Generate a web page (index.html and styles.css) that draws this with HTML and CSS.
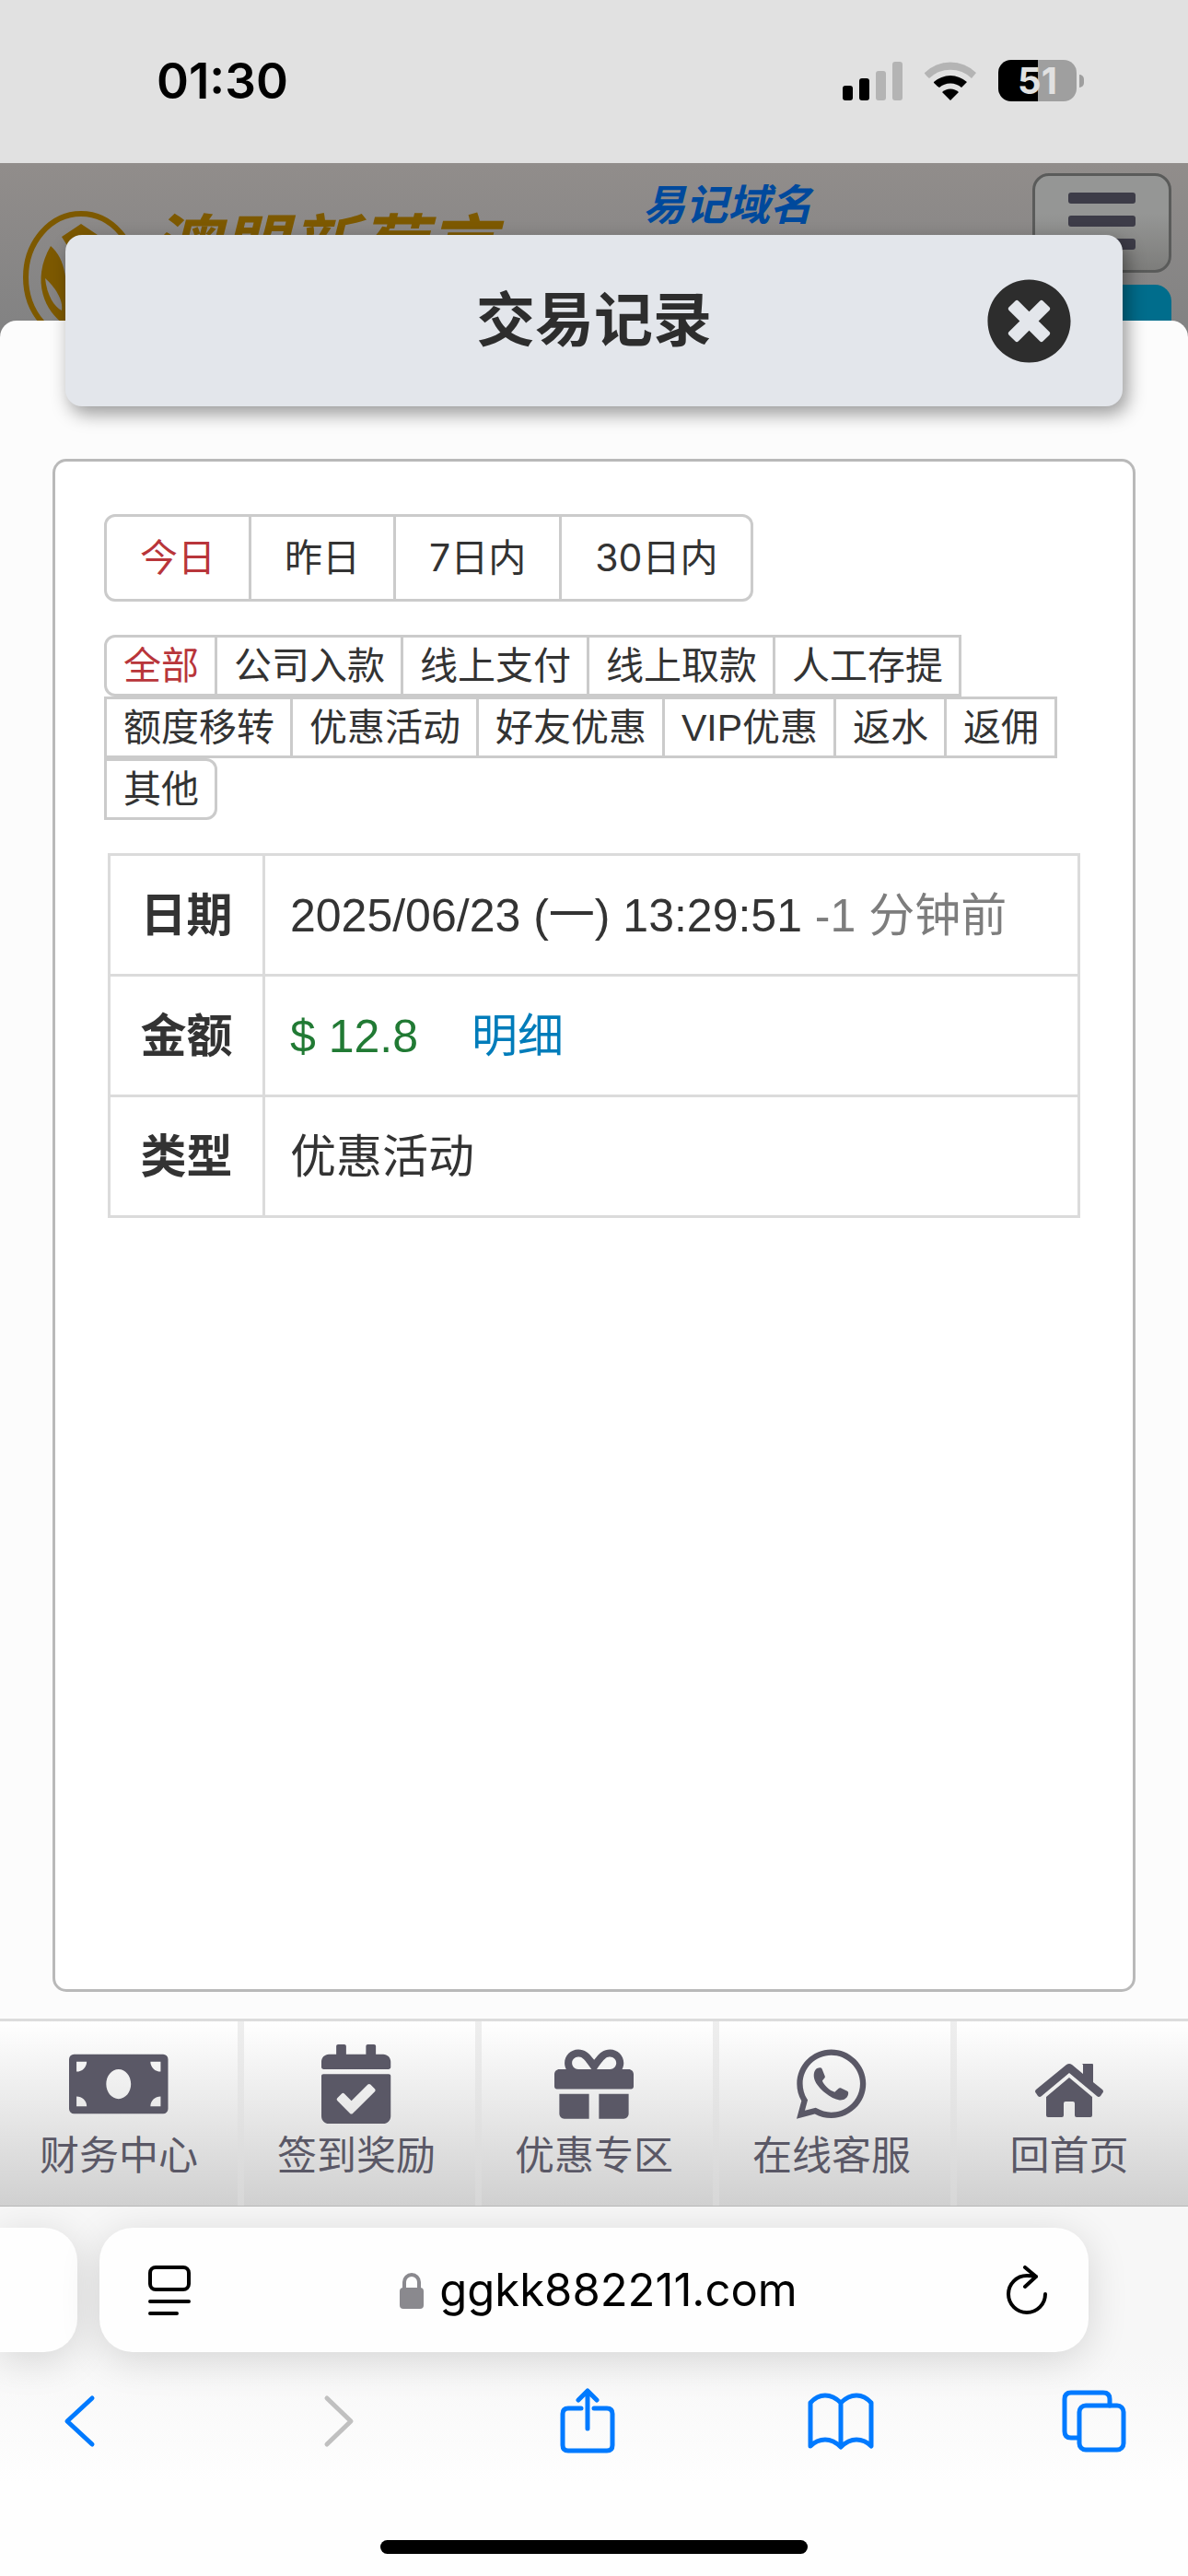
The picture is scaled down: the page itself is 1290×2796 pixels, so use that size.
FILE: index.html
```html
<!DOCTYPE html>
<html lang="zh-CN">
  <head>
    <meta charset="utf-8">
    <title>交易记录</title>
    <link rel="stylesheet" href="styles.css">
  </head>

  <body>
    <div class="status-bar">
      <span class="time">01:30</span>
      <div class="status-icons">
        <svg class="signal" viewBox="0 0 65 42">
          <rect x="0" y="26" width="11" height="16" rx="3" />
          <rect x="18" y="18" width="11" height="24" rx="3" />
          <rect class="off" x="36" y="10" width="11" height="32" rx="3" />
          <rect class="off" x="54" y="0" width="11" height="42" rx="3" />
        </svg>
        <svg class="wifi" viewBox="0 0 58 42">
          <path class="off" d="M1 12A40 40 0 0 1 57 12L52 18A33 33 0 0 0 6 18Q0 13 1 12Z" />
          <path d="M11 22A27 27 0 0 1 47 22L41 28A18 18 0 0 0 17 28Q10 23 11 22Z" />
          <path d="M20 33A13 13 0 0 1 38 33L29 42Z" />
        </svg>
        <div class="battery">
          <span class="battery-level">51</span>
          <span class="battery-cap"></span>
        </div>
      </div>
    </div>

    <div class="screen">
      <header class="site-header">
        <svg class="logo" viewBox="0 0 126 144">
          <ellipse cx="63" cy="72" rx="60" ry="69" fill="none" stroke="#7d5900" stroke-width="6" />
          <path d="M63 14L84 28L74 44L63 34L52 44L42 28Z" />
          <path d="M30 38C46 52 50 76 46 124C24 110 8 76 30 38Z" />
          <path d="M96 38C80 52 76 76 80 124C102 110 118 76 96 38Z" />
          <path class="vein" d="M24 73C34 82 44 96 42 108C34 104 26 92 24 73Z" />
        </svg>
        <span class="brand">澳盟新葡京</span>
        <a class="domain" href="#">易记域名</a>
        <div class="site-actions">
          <button class="menu" type="button" aria-label="菜单">
            <span></span>
            <span></span>
            <span></span>
          </button>
          <a class="login" href="#" aria-label="登录"></a>
        </div>
      </header>

      <main class="sheet">
        <div class="sheet-head">
          <h1>交易记录</h1>
          <button class="close" type="button" aria-label="关闭">
            <svg viewBox="0 0 512 512"><path d="M256 8C119 8 8 119 8 256s111 248 248 248 248-111 248-248S393 8 256 8zm121.6 313.1c4.7 4.7 4.7 12.3 0 17L338 377.6c-4.7 4.7-12.3 4.7-17 0L256 312l-65.1 65.6c-4.7 4.7-12.3 4.7-17 0L134.4 338c-4.7-4.7-4.7-12.3 0-17l65.6-65-65.6-65.1c-4.7-4.7-4.7-12.3 0-17l39.6-39.6c4.7-4.7 12.3-4.7 17 0l65 65.7 65.1-65.6c4.7-4.7 12.3-4.7 17 0l39.6 39.6c4.7 4.7 4.7 12.3 0 17L312 256l65.6 65.1z" /></svg>
          </button>
        </div>

        <div class="card">
          <div class="filter days">
            <button class="active" type="button">今日</button>
            <button type="button">昨日</button>
            <button type="button">7日内</button>
            <button type="button">30日内</button>
          </div>

          <div class="filter types">
            <button class="active" type="button">全部</button>
            <button type="button">公司入款</button>
            <button type="button">线上支付</button>
            <button type="button">线上取款</button>
            <button type="button">人工存提</button>
            <button type="button">额度移转</button>
            <button type="button">优惠活动</button>
            <button type="button">好友优惠</button>
            <button type="button">VIP优惠</button>
            <button type="button">返水</button>
            <button type="button">返佣</button>
            <button type="button">其他</button>
          </div>

          <table class="record">
            <tr>
              <th scope="row">日期</th>
              <td>2025/06/23 (一) 13:29:51 <span class="ago">-1 分钟前</span></td>
            </tr>
            <tr>
              <th scope="row">金额</th>
              <td><span class="amount">$ 12.8</span><a class="detail" href="#">明细</a></td>
            </tr>
            <tr>
              <th scope="row">类型</th>
              <td>优惠活动</td>
            </tr>
          </table>
        </div>
      </main>
    </div>

    <nav class="tabs">
      <a href="#">
        <svg viewBox="0 0 640 512"><path fill-rule="evenodd" d="M32 64H608A32 32 0 0 1 640 96V416A32 32 0 0 1 608 448H32A32 32 0 0 1 0 416V96A32 32 0 0 1 32 64ZM320 160C276 160 240 203 240 256S276 352 320 352 400 309 400 256 364 160 320 160ZM48 112V176A66 64 0 0 0 114 112ZM592 112H526A66 64 0 0 0 592 176ZM48 400H114A66 64 0 0 0 48 336ZM592 400V336A66 64 0 0 0 526 400Z" /></svg>
        <span>财务中心</span>
      </a>
      <a href="#">
        <svg viewBox="0 0 448 512"><path d="M436 160H12c-6.627 0-12-5.373-12-12v-36c0-26.51 21.49-48 48-48h48V12c0-6.627 5.373-12 12-12h40c6.627 0 12 5.373 12 12v52h128V12c0-6.627 5.373-12 12-12h40c6.627 0 12 5.373 12 12v52h48c26.51 0 48 21.49 48 48v36c0 6.627-5.373 12-12 12zM12 192h424c6.627 0 12 5.373 12 12v260c0 26.51-21.49 48-48 48H48c-26.51 0-48-21.49-48-48V204c0-6.627 5.373-12 12-12zm333.296 95.947l-28.169-28.398c-4.667-4.705-12.265-4.736-16.97-.068L194.12 364.665l-45.98-46.352c-4.667-4.705-12.266-4.736-16.971-.068l-28.397 28.17c-4.705 4.667-4.736 12.265-.068 16.97l82.601 83.269c4.667 4.705 12.265 4.736 16.97.068l142.953-141.805c4.705-4.667 4.736-12.265.068-16.97z" /></svg>
        <span>签到奖励</span>
      </a>
      <a href="#">
        <svg viewBox="0 0 512 512"><path d="M32 448c0 17.7 14.3 32 32 32h160V320H32v128zm256 32h160c17.7 0 32-14.3 32-32V320H288v160zm192-320h-42.1c6.2-12.1 10.1-25.5 10.1-40 0-48.5-39.5-88-88-88-41.6 0-68.5 21.3-103 68.3-34.5-47-61.4-68.3-103-68.3-48.5 0-88 39.5-88 88 0 14.5 3.8 27.9 10.1 40H32c-17.7 0-32 14.3-32 32v80c0 8.8 7.2 16 16 16h480c8.8 0 16-7.2 16-16v-80c0-17.7-14.3-32-32-32zm-326.1 0c-22.1 0-40-17.9-40-40s17.9-40 40-40c19.9 0 34.6 3.3 86.1 80h-86.1zm206.1 0h-86.1c51.4-76.5 65.7-80 86.1-80 22.1 0 40 17.9 40 40s-17.9 40-40 40z" /></svg>
        <span>优惠专区</span>
      </a>
      <a href="#">
        <svg viewBox="0 0 448 512">
          <path d="M380.9 97.1C339 55.1 283.2 32 223.9 32c-122.4 0-222 99.6-222 222 0 39.1 10.2 77.3 29.6 111L0 480l117.7-30.9c32.4 17.7 68.9 27 106.1 27h.1c122.3 0 224.1-99.6 224.1-222 0-59.3-25.2-115-67.1-157zm-157 341.6c-33.2 0-65.7-8.9-94-25.7l-6.7-4-69.8 18.3L72 359.2l-4.4-7c-18.5-29.4-28.2-63.3-28.2-98.2 0-101.7 82.8-184.5 184.6-184.5 49.3 0 95.6 19.2 130.4 54.1 34.8 34.9 56.2 81.2 56.1 130.5 0 101.8-84.9 184.6-186.6 184.6z" />
          <path d="M132 155Q158 145 164 158L183 205Q187 212 178 221L166 235C176 262 210 296 246 308L272 284Q277 279 285 282L328 302Q337 306 334 320C330 345 308 362 278 360C225 354 135 285 116 228C106 196 114 166 132 155Z" />
        </svg>
        <span>在线客服</span>
      </a>
      <a href="#">
        <svg viewBox="0 0 90 86">
          <path d="M59 21H70Q71 21 71 22V41L81 49Q83 51 81 53L79 56Q77 58 75 56L45 31L15 56Q13 58 11 56L9 53Q7 51 9 49L42 22Q45 20 48 22L60 32V22Z" />
          <path d="M45 36L70 57V77Q70 79 68 79H53Q51 79 51 77V64Q51 62 49 62H41Q39 62 39 64V77Q39 79 37 79H22Q20 79 20 77V57Z" />
        </svg>
        <span>回首页</span>
      </a>
    </nav>

    <footer class="browser">
      <div class="address-row">
        <div class="prev-tab"></div>
        <div class="address">
          <button type="button" aria-label="页面菜单">
            <svg width="46" height="54" viewBox="0 0 46 54">
              <rect x="2" y="2" width="42" height="24" rx="6" />
              <path d="M2 39H44M2 52H31" />
            </svg>
          </button>
          <button class="url" type="button">
            <svg class="lock" width="28" height="40" viewBox="0 0 28 40">
              <rect x="1" y="17" width="26" height="23" rx="4" />
              <path d="M6 18V11A8 8 0 0 1 22 11V18" />
            </svg>
            <span>ggkk882211.com</span>
          </button>
          <button type="button" aria-label="刷新">
            <svg width="46" height="54" viewBox="0 0 46 54">
              <path d="M33 12Q28 11 23 11A20 20 0 1 0 43 31M21 2L33 12L21 23" />
            </svg>
          </button>
        </div>
      </div>

      <div class="toolbar">
        <button type="button" aria-label="后退">
          <svg viewBox="0 0 72 72"><path d="M50 11L23 36L50 61" /></svg>
        </button>
        <button type="button" aria-label="前进" disabled>
          <svg viewBox="0 0 72 72"><path d="M29 11L55 36L29 61" /></svg>
        </button>
        <button type="button" aria-label="分享">
          <svg viewBox="0 0 72 72"><path d="M30 22H16Q10 22 10 28V62Q10 68 16 68H58Q64 68 64 62V28Q64 22 58 22H44M37 44V3M27 13L37 3L47 13" /></svg>
        </button>
        <button type="button" aria-label="书签">
          <svg viewBox="0 0 72 72"><path d="M36 16Q28 8 19 8T3 16V63Q10 56 19 56T36 64Q44 56 53 56T69 63V16Q62 8 53 8T36 16V63" /></svg>
        </button>
        <button type="button" aria-label="标签页">
          <svg viewBox="0 0 72 72"><path d="M18 54H11Q4 54 4 47V12Q4 5 11 5H46Q53 5 53 12V19" /><rect x="20" y="19" width="48" height="48" rx="7" /></svg>
        </button>
      </div>
      <div class="home-bar"></div>
    </footer>
  </body>
</html>
```

FILE: styles.css
```css
* {
  box-sizing: border-box;
}

body {
  margin: 0;
  min-height: 100vh;
  display: flex;
  flex-direction: column;
  background-color: #fcfcfc;
  color: #333;
  font-family: "Liberation Sans", "Noto Sans CJK SC", sans-serif;
}

a {
  text-decoration: none;
}

button {
  padding: 0;
  border: none;
  background: none;
  color: inherit;
  font-family: inherit;
  cursor: pointer;
}

svg {
  display: block;
}

/* Status bar */

.status-bar {
  height: 177px;
  padding: 0 113px 2px 170px;
  display: flex;
  justify-content: space-between;
  align-items: center;
  background-color: #e1e1e1;
  color: #000;
}

.time {
  font-family: Inter, sans-serif;
  font-size: 53px;
  font-weight: 600;
}

.status-icons {
  display: flex;
  align-items: center;
  gap: 23px;
}

.signal {
  width: 65px;
  height: 42px;
}

.wifi {
  width: 58px;
  height: 42px;
}

.off {
  fill: #b4b4b4;
}

.battery {
  display: flex;
  align-items: center;
  gap: 3px;
}

.battery-level {
  width: 85px;
  border-radius: 14px;
  background: linear-gradient(90deg, #000 51%, #9f9f9f 51%);
  color: #e1e1e1;
  font-family: Inter, sans-serif;
  font-size: 40px;
  font-weight: 700;
  line-height: 45px;
  text-align: center;
}

.battery-cap {
  width: 5px;
  height: 14px;
  border-radius: 0 5px 5px 0;
  background-color: #9f9f9f;
}

/* Dimmed site header behind the sheet */

.screen {
  flex: 1;
  position: relative;
  display: flex;
  flex-direction: column;
}

.site-header {
  position: absolute;
  top: 0;
  left: 0;
  right: 0;
  height: 220px;
  padding: 11px 18px 0 25px;
  display: flex;
  align-items: flex-start;
  overflow: hidden;
  background: linear-gradient(#918d8b, #7f8081);
}

.logo {
  width: 126px;
  height: 144px;
  margin-top: 41px;
  fill: #7d5900;
}

.logo .vein {
  fill: #868484;
}

.brand {
  margin: 41px 0 0 12px;
  color: #7d5900;
  font-size: 75px;
  font-weight: 700;
  font-style: italic;
  line-height: 80px;
}

.domain {
  margin: 8px auto 0 160px;
  color: #00499c;
  font-size: 46px;
  font-weight: 700;
  font-style: italic;
  line-height: 54px;
}

.site-actions {
  width: 151px;
  display: flex;
  flex-direction: column;
  gap: 13px;
}

.menu {
  height: 108px;
  padding: 18px 36px;
  border: 3px solid #5a5b5a;
  border-radius: 18px;
  background: linear-gradient(#959695 40%, #7d7d7b);
  display: flex;
  flex-direction: column;
  gap: 13px;
}

.menu span {
  height: 12px;
  border-radius: 3px;
  background-color: #3d3c48;
}

.login {
  height: 100px;
  border-radius: 18px;
  background-color: #006d8c;
}

/* Sheet */

.sheet {
  position: relative;
  flex: 1;
  margin-top: 171px;
  padding: 0 57px 29px;
  display: flex;
  flex-direction: column;
  border-radius: 18px 18px 0 0;
  background-color: #fcfcfc;
}

.sheet-head {
  height: 186px;
  margin: -93px 14px 57px;
  padding: 0 55px;
  display: grid;
  grid-template-columns: 1fr auto 1fr;
  align-items: center;
  border-radius: 18px;
  background-color: #e3e6eb;
  box-shadow: 5px 8px 20px rgba(0, 0, 0, 0.4);
}

.sheet-head h1 {
  grid-column: 2;
  margin: 0;
  color: #2d2d2d;
  font-size: 64px;
  font-weight: 700;
  line-height: 80px;
}

.close {
  justify-self: end;
}

.close svg {
  width: 93px;
  height: 93px;
  fill: #2d2d2d;
}

.card {
  flex: 1;
  padding: 57px 53px;
  border: 3px solid #b9b9b9;
  border-radius: 15px;
  background-color: #fff;
}

/* Filters */

.filter {
  display: flex;
  flex-wrap: wrap;
  padding-left: 3px;
}

.filter button {
  margin-left: -3px;
  border: 3px solid #cbcbcb;
  font-size: 41px;
}

.filter button:first-child {
  border-radius: 12px 0 0 12px;
}

.filter button:last-child {
  border-radius: 0 12px 12px 0;
}

.filter .active {
  color: #b8353a;
}

.days {
  margin-bottom: 36px;
}

.days button {
  padding: 0 36px;
  font-family: Inter, "Noto Sans CJK SC", sans-serif;
  line-height: 89px;
}

.types {
  margin-bottom: 36px;
}

.types button {
  padding: 2px 17px 0 18px;
  line-height: 59px;
}

/* Record */

.record {
  width: calc(100% - 8px);
  margin: 0 4px;
  border-collapse: collapse;
  font-size: 50px;
}

.record th,
.record td {
  height: 131px;
  padding: 0 0 8px;
  border: 3px solid #dbdbdb;
}

.record th {
  width: 168px;
}

.record td {
  padding-left: 27px;
  text-align: left;
}

.ago {
  color: #7d7d7d;
}

.amount {
  color: #217a34;
}

.detail {
  margin-left: 58px;
  color: #007cba;
}

/* Bottom tabs */

.tabs {
  height: 204px;
  display: grid;
  grid-template-columns: repeat(5, 1fr);
  border-top: 3px solid #dcdcdc;
  border-bottom: 1px solid #b8b8b8;
  background: linear-gradient(#fff, #d0d0d0);
}

.tabs a {
  padding-top: 25px;
  display: flex;
  flex-direction: column;
  align-items: center;
  gap: 8px;
  color: #5a5866;
  font-size: 43px;
  line-height: 54px;
}

.tabs a + a {
  background: linear-gradient(#eee, #d7d7d7) left / 7px 100% no-repeat;
}

.tabs svg {
  height: 86px;
  fill: #5a5866;
}

/* Browser bar */

.browser {
  height: 401px;
  background: linear-gradient(#f7f7f7 40%, #fefefe 75%);
  overflow: hidden;
}

.address-row {
  padding: 23px 108px 0 0;
  display: flex;
  gap: 24px;
}

.prev-tab,
.address {
  height: 135px;
  background-color: #fefefe;
  box-shadow: 0 8px 44px rgba(0, 0, 0, 0.14);
}

.prev-tab {
  width: 84px;
  border-radius: 0 36px 36px 0;
}

.address {
  flex: 1;
  padding: 0 44px 0 53px;
  display: flex;
  justify-content: space-between;
  align-items: center;
  border-radius: 36px;
}

.address svg {
  fill: none;
  stroke: #000;
  stroke-width: 4;
  stroke-linecap: round;
  stroke-linejoin: round;
}

.url {
  display: flex;
  align-items: center;
  gap: 16px;
  color: #000;
  font-family: Inter, sans-serif;
  font-size: 49px;
}

.url .lock {
  stroke: #8a898e;
}

.lock rect {
  fill: #8a898e;
  stroke: none;
}

.toolbar {
  padding: 39px 66px 0 50px;
  display: flex;
  justify-content: space-between;
}

.toolbar svg {
  width: 72px;
  height: 72px;
  fill: none;
  stroke: #007aff;
  stroke-width: 5;
  stroke-linecap: round;
  stroke-linejoin: round;
}

.toolbar button:disabled svg {
  stroke: #c0c0c0;
}

.home-bar {
  width: 36%;
  height: 15px;
  margin: 93px auto 0;
  border-radius: 8px;
  background-color: #000;
}
```
